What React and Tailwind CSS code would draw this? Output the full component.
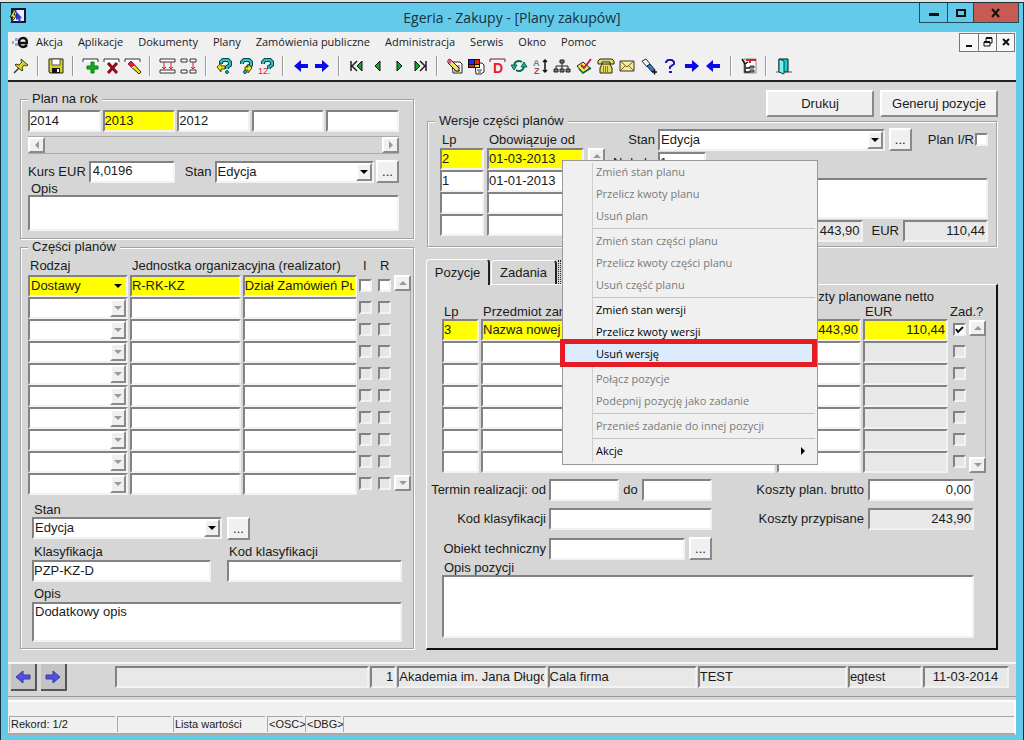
import { useState } from 'react'

const MENU = ['Akcja', 'Aplikacje', 'Dokumenty', 'Plany', 'Zamówienia publiczne', 'Administracja', 'Serwis', 'Okno', 'Pomoc']

const YEARS = ['2014', '2013', '2012', '', '']

const PARTS = [
  { kind: 'Dostawy', code: 'R-RK-KZ', name: 'Dział Zamówień Publicznych' },
  ...Array.from({ length: 9 }, () => ({ kind: '', code: '', name: '' })),
]

const VERSIONS = [
  { lp: '2', date: '01-03-2013' },
  { lp: '1', date: '01-01-2013' },
  { lp: '', date: '' },
  { lp: '', date: '' },
]

const POSITIONS = [
  { lp: '3', name: 'Nazwa nowej pozycji', pln: '443,90', eur: '110,44', task: true },
  ...Array.from({ length: 6 }, () => ({ lp: '', name: '', pln: '', eur: '', task: false })),
]

const CONTEXT_MENU = [
  [
    { label: 'Zmień stan planu', disabled: true },
    { label: 'Przelicz kwoty planu', disabled: true },
    { label: 'Usuń plan', disabled: true },
  ],
  [
    { label: 'Zmień stan części planu', disabled: true },
    { label: 'Przelicz kwoty części planu', disabled: true },
    { label: 'Usuń część planu', disabled: true },
  ],
  [
    { label: 'Zmień stan wersji' },
    { label: 'Przelicz kwoty wersji' },
    { label: 'Usuń wersję', active: true },
  ],
  [
    { label: 'Połącz pozycje', disabled: true },
    { label: 'Podepnij pozycję jako zadanie', disabled: true },
  ],
  [{ label: 'Przenieś zadanie do innej pozycji', disabled: true }],
  [{ label: 'Akcje', submenu: true }],
]

// Sunken Win32 edge shared by every field
const SUNKEN = 'border-2 border-t-[#828282] border-l-[#828282] border-r-[#f2f2f2] border-b-[#f2f2f2]'
const RAISED = 'border-2 border-t-white border-l-white border-r-[#8a8a8a] border-b-[#8a8a8a] bg-[#f0f0f0]'

const ARROW_RIGHT = 'M1 6h7V2l7 6-7 6v-4H1z'
const ARROW_LEFT = 'M15 6H8V2L1 8l7 6v-4h7z'

const QUESTION = 'M5 6V4l2-2h5l2 2v3l-3 2v2'

const ICONS = {
  pin: (
    <>
      <path d="M1 15l5-5" stroke="#333" strokeWidth="1.5" />
      <path d="M8 1l7 6-2 1-2-1-2 3 1 2-1 1-7-6 1-1 3 1 3-3-1-2z" fill="#d8cf30" stroke="#4a4600" />
    </>
  ),
  save: (
    <>
      <path d="M1 1h14v14H2l-1-1z" fill="#d8d02a" stroke="#222" />
      <path d="M4 1h8v6H4z" fill="#fff" stroke="#555" />
      <path d="M4 10h8v5H4z" fill="#111" />
      <path d="M9 11h2v3H9z" fill="#fff" />
    </>
  ),
  insert: (
    <>
      <path d="M0 4V1h15v3" fill="#fff" stroke="#333" />
      <path d="M8 4h3v4h4v3h-4v4H8v-4H4V8h4z" fill="#12b01c" stroke="#0a7a12" />
    </>
  ),
  remove: (
    <>
      <path d="M0 4V1h15v3" fill="#fff" stroke="#333" />
      <path d="M4 5l9 10M13 5L4 15" stroke="#8d0d1a" strokeWidth="3" />
    </>
  ),
  clear: (
    <>
      <path d="M0 4V1h15v3" fill="#fff" stroke="#333" />
      <path d="M6 3l10 11-2 2L3 6z" fill="#e8dc20" stroke="#222" />
      <path d="M6 3l4 4-3 3-4-4z" fill="#e02040" />
      <path d="M9 8l-2 2" stroke="#fff" />
    </>
  ),
  enterQuery: (
    <>
      <path d="M0 4V1h15v3zM0 15v-3h15v3z" fill="#fff" stroke="#333" />
      <path d="M4 4v7M11 4v7M2 9l2 2 2-2M9 9l2 2 2-2" stroke="#d1202c" fill="none" />
    </>
  ),
  splitQuery: (
    <>
      <path d="M0 4V1h6v3zM9 4V1h6v3zM0 15v-3h6v3zM9 15v-3h6v3z" fill="#fff" stroke="#333" />
      <path d="M12 4v7M10 9l2 2 2-2" stroke="#d1202c" fill="none" />
    </>
  ),
  askLeft: (
    <>
      <path d={QUESTION} fill="none" stroke="#064a4d" strokeWidth="4" />
      <path d={QUESTION} fill="none" stroke="#27c3c8" strokeWidth="2" />
      <circle cx="11" cy="14" r="1.5" fill="#27c3c8" stroke="#064a4d" />
      <path d="M1 9l4-4v3h4v3H5v3z" fill="#f2e41c" stroke="#4a4600" />
    </>
  ),
  askRight: (
    <>
      <path d={QUESTION} fill="none" stroke="#064a4d" strokeWidth="4" />
      <path d={QUESTION} fill="none" stroke="#27c3c8" strokeWidth="2" />
      <circle cx="8" cy="14" r="1.5" fill="#27c3c8" stroke="#064a4d" />
      <path d="M15 10l-4-4v3H8v3h3v3z" fill="#f2e41c" stroke="#4a4600" />
    </>
  ),
  askCount: (
    <>
      <path d={QUESTION} fill="none" stroke="#064a4d" strokeWidth="4" />
      <path d={QUESTION} fill="none" stroke="#27c3c8" strokeWidth="2" />
      <text x="0" y="16" fontSize="9" fill="#e02030">12.</text>
    </>
  ),
  left: <path d={ARROW_LEFT} fill="#0808e8" />,
  right: <path d={ARROW_RIGHT} fill="#0808e8" />,
  first: (
    <>
      <path d="M2 3v10M8 3L3 8l5 5" fill="none" stroke="#222" strokeWidth="1.5" />
      <path d="M13 3L8 8l5 5z" fill="#16a52a" stroke="#111" />
    </>
  ),
  prev: <path d="M10 3L5 8l5 5z" fill="#16a52a" stroke="#111" />,
  next: <path d="M6 3l5 5-5 5z" fill="#16a52a" stroke="#111" />,
  last: (
    <>
      <path d="M14 3v10M8 3l5 5-5 5" fill="none" stroke="#222" strokeWidth="1.5" />
      <path d="M3 3l5 5-5 5z" fill="#16a52a" stroke="#111" />
    </>
  ),
  edit: (
    <>
      <path d="M5 4h8l2 2v9H6z" fill="#fff" stroke="#222" />
      <path d="M7 13h6M9 8h4M10 10h3" stroke="#555" />
      <path d="M1 2l2-1 9 9v3H9L1 5z" fill="#f0df60" stroke="#222" />
      <path d="M1 2l2-1 2 2-2 3-2-2z" fill="#d8509c" />
    </>
  ),
  palette: (
    <>
      <path d="M7 5h7l2 2v7l-3 2H8z" fill="#fff" stroke="#222" />
      <path d="M0 1h12v9H0z" fill="#111" />
      <path d="M1 2h5v4H1z" fill="#1c2cf0" />
      <path d="M7 2h4v4H7z" fill="#f01c1c" />
      <path d="M1 7h5v2H1z" fill="#f01c1c" />
      <path d="M7 7h4v2H7z" fill="#f0e01c" />
      <path d="M9 12h5M10 14h3" stroke="#333" />
    </>
  ),
  dict: (
    <>
      <path d="M0 4V1h15v3" fill="none" stroke="#7c1a22" />
      <text x="3" y="15" fontSize="14" fontWeight="bold" fill="#ea1c2c">D</text>
    </>
  ),
  refresh: (
    <>
      <path d="M3 7c1-4 5-5 8-3" fill="none" stroke="#0b6a58" strokeWidth="2" />
      <path d="M0 7h6l-3 5z" fill="#1fae90" stroke="#0b6a58" />
      <path d="M13 9c-1 4-5 5-8 3" fill="none" stroke="#0b6a58" strokeWidth="2" />
      <path d="M16 9h-6l3-5z" fill="#1fae90" stroke="#0b6a58" />
    </>
  ),
  sort: (
    <>
      <text x="0" y="8" fontSize="9" fontWeight="bold" fill="#5f8a87">A</text>
      <text x="1" y="16" fontSize="9" fontWeight="bold" fill="#a04a55">Z</text>
      <path d="M12 2v12M10 4l2-2 2 2M10 12l2 2 2-2" stroke="#111" strokeWidth="1.5" fill="none" />
    </>
  ),
  tree: (
    <>
      <path d="M8 4v4M2 12V8h12v4M8 8v4" fill="none" stroke="#222" />
      <path d="M6 2h4v3H6zM0 11h4v3H0zM6 11h4v3H6zM12 11h4v3h-4z" fill="#777" stroke="#222" />
    </>
  ),
  approve: (
    <>
      <path d="M1 8l6-4 7 6-7 5z" fill="#f2e85c" stroke="#222" />
      <path d="M3 11l4 4 8-5" fill="none" stroke="#0a6a3a" strokeWidth="1.5" />
      <path d="M5 7l3 3 7-9" fill="none" stroke="#c01c50" strokeWidth="2" />
    </>
  ),
  phone: (
    <>
      <path d="M0 3l2-2h12l2 2v3h-4V4H4v2H0z" fill="#e6dc5c" stroke="#222" />
      <path d="M4 6h8l2 4v5H2v-5z" fill="#e6dc5c" stroke="#222" />
      <path d="M5 9h6M5 11h6M5 13h6" stroke="#222" strokeDasharray="1 1" />
    </>
  ),
  mail: (
    <>
      <path d="M1 3h14v10H1z" fill="#f8ee96" stroke="#333" />
      <path d="M1 3l7 6 7-6M1 13l5-5M15 13l-5-5" fill="none" stroke="#6a5a28" />
    </>
  ),
  torch: (
    <>
      <path d="M1 3l4-2 4 5-3 3z" fill="#e8f4ff" stroke="#333" />
      <path d="M6 8l3-2 5 6-3 2z" fill="#3b7cc8" stroke="#112233" />
      <path d="M11 14h5M13.5 11.5v5" stroke="#111" strokeWidth="1.5" />
    </>
  ),
  help: (
    <>
      <path d="M4 5V4l2-2h4l2 2v2L8 9v2" fill="none" stroke="#1a1ab8" strokeWidth="2" />
      <path d="M7 13h3v2H7z" fill="#1a1ab8" />
    </>
  ),
  outline: (
    <>
      <path d="M3 1h12v14H3z" fill="#fff" stroke="#888" />
      <path d="M5 2h10" stroke="#e02030" strokeWidth="2" />
      <path d="M1 1l3 5 3-2M4 6v8h5M5 10h4M8 4h2" fill="none" stroke="#111" strokeWidth="1.5" />
      <path d="M9 8h4v2H9zM9 12h4v2H9z" fill="#999" stroke="#333" />
    </>
  ),
  door: (
    <>
      <path d="M3 1h9v13H3z" fill="#18d0d0" stroke="#111" />
      <path d="M3 1l5 2v13l-5-2z" fill="#7af0f0" stroke="#0a4040" />
      <path d="M0 14h3M12 14h4" stroke="#555" />
    </>
  ),
}

const TOOLBAR = [
  [['pin', 'Przypnij']],
  [['save', 'Zapisz']],
  [['insert', 'Dodaj rekord'], ['remove', 'Usuń rekord'], ['clear', 'Wyczyść rekord']],
  [['enterQuery', 'Wyczyść blok'], ['splitQuery', 'Duplikuj']],
  [['askLeft', 'Wprowadź zapytanie'], ['askRight', 'Wykonaj zapytanie'], ['askCount', 'Policz rekordy']],
  [['left', 'Poprzedni blok'], ['right', 'Następny blok']],
  [['first', 'Pierwszy'], ['prev', 'Poprzedni'], ['next', 'Następny'], ['last', 'Ostatni']],
  [
    ['edit', 'Edytuj'], ['palette', 'Kolory'], ['dict', 'Słownik'], ['refresh', 'Odśwież'], ['sort', 'Sortuj'],
    ['tree', 'Struktura'], ['approve', 'Zatwierdź'], ['phone', 'Telefon'], ['mail', 'Poczta'], ['torch', 'Szukaj'],
    ['help', 'Pomoc'], ['right', 'Dalej'], ['left', 'Wstecz'],
  ],
  [['outline', 'Drzewo']],
  [['door', 'Wyjście']],
]

function Icon({ name }) {
  return (
    <svg className="h-4 w-4 shrink-0 overflow-visible" viewBox="0 0 16 16" aria-hidden="true">
      {ICONS[name]}
    </svg>
  )
}

function Field({ className = '', tone = 'bg-white', ...props }) {
  return <input type="text" className={`block h-[22px] min-w-0 pr-px pb-[2px] ${SUNKEN} ${tone} ${className}`} {...props} />
}

function Area({ className = '', ...props }) {
  return <textarea className={`block w-full resize-none bg-white px-px ${SUNKEN} ${className}`} {...props} />
}

function Tick({ tone = 'bg-white', ...props }) {
  return (
    <span className="relative block h-[13px] w-[13px] shrink-0">
      <input type="checkbox" className={`peer block h-[13px] w-[13px] appearance-none ${SUNKEN} ${tone}`} {...props} />
      <svg className="pointer-events-none absolute inset-0 hidden h-[13px] w-[13px] peer-checked:block" viewBox="0 0 13 13">
        <path d="M3 6l2 3 5-5" fill="none" stroke="#111" strokeWidth="2" />
      </svg>
    </span>
  )
}

function Triangle({ dir, className = 'text-[#999]' }) {
  const d = { up: 'M0 6l4-4 4 4z', down: 'M0 2h8L4 6z', left: 'M6 0v8L2 4z', right: 'M2 0l4 4-4 4z' }[dir]
  return (
    <svg className={`h-2 w-2 ${className}`} viewBox="0 0 8 8" aria-hidden="true">
      <path d={d} fill="currentColor" />
    </svg>
  )
}

function Select({ value, className = '', tone = 'bg-white', off = false, ...props }) {
  return (
    <span className={`relative block min-w-0 ${className}`}>
      <select
        className={`block h-[22px] w-full appearance-none pl-px ${SUNKEN} ${tone}`}
        disabled={off}
        defaultValue={value}
        {...props}
      >
        <option value={value}>{value}</option>
      </select>
      <span className={`pointer-events-none absolute top-[2px] right-[2px] flex h-[18px] w-[16px] items-center justify-center ${tone === 'bg-white' ? RAISED : ''}`}>
        <Triangle dir="down" className={off ? 'text-[#999]' : 'text-black'} />
      </span>
    </span>
  )
}

function Dots({ label }) {
  return (
    <button type="button" aria-label={label} className={`h-[23px] w-[23px] shrink-0 leading-[14px] ${RAISED}`}>
      ...
    </button>
  )
}

function ScrollEnd({ dir, label }) {
  return (
    <button type="button" aria-label={label} className={`flex h-4 w-[17px] shrink-0 items-center justify-center ${RAISED}`}>
      <Triangle dir={dir} />
    </button>
  )
}

function VScroll({ className = '' }) {
  return (
    <div className={`flex w-[17px] shrink-0 flex-col justify-between border-r border-[#aaa] bg-[#d6d6d6] ${className}`}>
      <ScrollEnd dir="up" label="W górę" />
      <ScrollEnd dir="down" label="W dół" />
    </div>
  )
}

function Group({ title, className = '', bodyClass = '', children }) {
  return (
    <fieldset className={`min-w-0 border border-[#a2a2a2] shadow-[1px_1px_0_#fff,inset_1px_1px_0_#fff] ${className}`}>
      <legend className="ml-[7px] bg-[#d6d6d6] px-1 leading-[14px]">{title}</legend>
      <div className={bodyClass}>{children}</div>
    </fieldset>
  )
}

function TitleBar() {
  return (
    <header className="flex h-[29px] items-start bg-[#64caea] px-2">
      <div className="flex-1 pt-1">
        <svg className="h-[18px] w-[18px]" viewBox="0 0 18 18" aria-hidden="true">
          <path d="M3 2h13v13H3z" fill="#e8ecff" stroke="#15153a" strokeWidth="2" />
          <path d="M7 4l6 7-2 .5 1 3-2 .5-1-3-2 1z" fill="#2a3ae0" />
          <path d="M5 3L1 10h3l-2 6 6-8H5l2-5z" fill="#f0dc28" stroke="#222" />
        </svg>
      </div>
      <h1 className="self-center font-['Open_Sans','Noto_Sans',sans-serif] text-[14px] text-[#16323c]">
        Egeria - Zakupy - [Plany zakupów]
      </h1>
      <div className="flex flex-1 justify-end">
        <div className="-mr-1 flex h-[20px] border border-t-0 border-[#1f4b5a]">
          <button type="button" aria-label="Minimalizuj" className="flex w-[27px] items-center justify-center">
            <svg className="h-3 w-3" viewBox="0 0 12 12"><path d="M1 6h10v3H1z" fill="#111" /></svg>
          </button>
          <button type="button" aria-label="Maksymalizuj" className="flex w-[26px] items-center justify-center border-l border-[#1f4b5a]">
            <svg className="h-3 w-3" viewBox="0 0 12 12"><path d="M2 3h8v6H2z" fill="none" stroke="#111" strokeWidth="2" /></svg>
          </button>
          <button type="button" aria-label="Zamknij" className="flex w-[45px] items-center justify-center border-l border-[#1f4b5a] bg-[#c75b54]">
            <svg className="h-3 w-3" viewBox="0 0 12 12"><path d="M2 2l7 8M9 2l-7 8" stroke="#111" strokeWidth="2" /></svg>
          </button>
        </div>
      </div>
    </header>
  )
}

function MenuBar() {
  return (
    <div className="flex h-5 items-center bg-[#f0f0f0] pl-1">
      <svg className="mr-2 h-4 w-4" viewBox="0 0 16 16" aria-hidden="true">
        <path d="M0 7h2v3H0zM3 4h3v3H3zM3 9h3v3H3z" fill="#9aa0e0" />
        <path d="M6 9h9c0-3-1.5-5-4-5s-4 2-4 4.5 2 4.5 4 4.5 3-1 4-2" fill="none" stroke="#111" strokeWidth="2.5" />
      </svg>
      <nav className="flex flex-1 gap-[15px] font-['Open_Sans','Noto_Sans',sans-serif] text-[11px]">
        {MENU.map((item) => (
          <button key={item} type="button">{item}</button>
        ))}
      </nav>
      <div className="mr-px flex h-[19px] border border-[#777] bg-[#f8f8f8]">
        <button type="button" aria-label="Minimalizuj dokument" className="flex w-[18px] items-center justify-center">
          <svg className="h-3 w-3" viewBox="0 0 12 12"><path d="M3 9h6v2H3z" fill="#111" /></svg>
        </button>
        <button type="button" aria-label="Przywróć dokument" className="flex w-[18px] items-center justify-center border-l border-[#777]">
          <svg className="h-3 w-3" viewBox="0 0 12 12">
            <path d="M4 5V2h6v5H8M2 6h6v4H2z" fill="none" stroke="#111" />
            <path d="M4 2h6M2 6h6" stroke="#111" strokeWidth="2" />
          </svg>
        </button>
        <button type="button" aria-label="Zamknij dokument" className="flex w-[18px] items-center justify-center border-l border-[#777]">
          <svg className="h-3 w-3" viewBox="0 0 12 12"><path d="M3 3l6 6M9 3L3 9" stroke="#111" strokeWidth="2" /></svg>
        </button>
      </div>
    </div>
  )
}

function Toolbar() {
  return (
    <div className="flex h-[30px] items-center border-b-2 border-[#222] bg-[#f0f0f0] pl-[2px]">
      {TOOLBAR.map((group, i) => (
        <div key={i} className="flex items-center">
          {i > 0 && <span className="mx-[6px] h-5 w-[2px] border-l border-[#999] bg-white" />}
          <div className={`flex justify-between ${group.length > 6 ? 'w-[280px]' : ''}`}>
            {group.map(([icon, label]) => (
              <button key={label} type="button" aria-label={label} className="flex w-[21px] justify-center">
                <Icon name={icon} />
              </button>
            ))}
          </div>
        </div>
      ))}
    </div>
  )
}

function PlanGroup() {
  const [year, setYear] = useState(1)

  return (
    <Group title="Plan na rok" bodyClass="pr-[14px] pb-[7px] pl-[7px]">
      <div className="grid grid-cols-5 gap-[2px] pt-1">
        {YEARS.map((y, i) => (
          <Field
            key={i}
            aria-label={`Rok ${i + 1}`}
            className="w-full"
            tone={i === year ? 'bg-[#ffff00]' : 'bg-white'}
            defaultValue={y}
            onFocus={() => setYear(i)}
          />
        ))}
      </div>
      <div className="mt-1 flex justify-between border-y border-[#aaa]">
        <ScrollEnd dir="left" label="W lewo" />
        <ScrollEnd dir="right" label="W prawo" />
      </div>
      <div className="mt-[6px] flex items-center">
        <label htmlFor="rate">Kurs EUR</label>
        <Field id="rate" className="ml-[3px] w-[86px] pl-[2px]" defaultValue="4,0196" />
        <label htmlFor="plan-state" className="mr-[3px] ml-[10px]">Stan</label>
        <Select id="plan-state" value="Edycja" className="mr-[2px] flex-1" />
        <Dots label="Stan planu" />
      </div>
      <label htmlFor="plan-desc" className="ml-[3px] block w-fit leading-[12px]">Opis</label>
      <Area id="plan-desc" className="h-9" />
    </Group>
  )
}

function PartsGroup() {
  return (
    <Group title="Części planów" className="mt-px" bodyClass="pr-[2px] pb-[6px] pl-[7px]">
      <div className="flex">
        <table className="mt-[3px] w-full flex-1 table-fixed border-separate border-spacing-0">
          <colgroup>
            <col className="w-[28%]" />
            <col className="w-[31%]" />
            <col />
            <col className="w-[19px]" />
            <col className="w-[14px]" />
          </colgroup>
          <thead>
            <tr className="h-[18px] text-left leading-[14px]">
              <th className="p-0 pl-[2px] font-normal">Rodzaj</th>
              <th colSpan={2} className="p-0 pl-[2px] font-normal">Jednostka organizacyjna (realizator)</th>
              <th className="p-0 pl-1 font-normal">I</th>
              <th className="p-0 pl-[2px] font-normal">R</th>
            </tr>
          </thead>
          <tbody>
            {PARTS.map((row, i) => {
              const tone = i === 0 ? 'bg-[#ffff00]' : 'bg-white'
              return (
                <tr key={i} className="h-[22px] align-top">
                  <td className="p-0 pr-[2px]">
                    <Select value={row.kind} tone={tone} off={i > 0} aria-label={`Rodzaj ${i + 1}`} />
                  </td>
                  <td className="p-0 pr-[2px]">
                    <Field className="w-full" tone={tone} defaultValue={row.code} aria-label={`Kod jednostki ${i + 1}`} />
                  </td>
                  <td className="p-0 pr-[2px]">
                    <Field className="w-full" tone={tone} defaultValue={row.name} aria-label={`Nazwa jednostki ${i + 1}`} />
                  </td>
                  <td className="p-0 pt-1">
                    <Tick tone={i === 0 ? 'bg-white' : 'bg-[#e6e6e6]'} disabled={i > 0} aria-label={`I ${i + 1}`} />
                  </td>
                  <td className="p-0 pt-1">
                    <Tick tone={i === 0 ? 'bg-white' : 'bg-[#e6e6e6]'} disabled={i > 0} aria-label={`R ${i + 1}`} />
                  </td>
                </tr>
              )
            })}
          </tbody>
        </table>
        <VScroll className="mt-[21px] mb-1 ml-[2px]" />
      </div>
      <div className="pr-[9px] pl-1">
        <label htmlFor="part-state" className="mt-2 block w-fit pl-[2px] leading-[14px]">Stan</label>
        <div className="flex">
          <Select id="part-state" value="Edycja" className="mr-[5px] w-[190px]" />
          <Dots label="Stan części" />
        </div>
        <div className="mt-1 grid grid-cols-[179fr_175fr] gap-4">
          <div>
            <label htmlFor="class" className="block w-fit pl-[2px] leading-[16px]">Klasyfikacja</label>
            <Field id="class" className="w-full" defaultValue="PZP-KZ-D" />
          </div>
          <div>
            <label htmlFor="class-code" className="block w-fit pl-[2px] leading-[16px]">Kod klasyfikacji</label>
            <Field id="class-code" className="w-full" />
          </div>
        </div>
        <label htmlFor="part-desc" className="mt-1 block w-fit pl-[2px] leading-[16px]">Opis</label>
        <Area id="part-desc" className="h-10" defaultValue="Dodatkowy opis" />
      </div>
    </Group>
  )
}

function VersionsGroup() {
  return (
    <Group title="Wersje części planów" className="mx-px -mt-[3px]" bodyClass="pr-2 pb-1 pl-3">
      <div className="flex">
        <table className="mt-1 w-[144px] table-fixed self-start border-separate border-spacing-0">
          <colgroup>
            <col className="w-[47px]" />
            <col />
          </colgroup>
          <thead>
            <tr className="h-4 text-left leading-[14px]">
              <th className="p-0 pl-[2px] font-normal">Lp</th>
              <th className="p-0 pl-[2px] font-normal">Obowiązuje od</th>
            </tr>
          </thead>
          <tbody>
            {VERSIONS.map((row, i) => {
              const tone = i === 0 ? 'bg-[#ffff00]' : 'bg-white'
              return (
                <tr key={i} className="h-[22px] align-top">
                  <td className="p-0 pr-[3px]">
                    <Field className="w-full" tone={tone} defaultValue={row.lp} aria-label={`Lp wersji ${i + 1}`} />
                  </td>
                  <td className="p-0">
                    <Field className="w-full" tone={tone} defaultValue={row.date} aria-label={`Obowiązuje od ${i + 1}`} />
                  </td>
                </tr>
              )
            })}
          </tbody>
        </table>
        <VScroll className="mt-5 mb-2 ml-1" />
        <div className="min-w-0 flex-1">
          <div className="flex items-center">
            <label htmlFor="ver-state" className="mr-[3px] w-[50px] text-right">Stan</label>
            <Select id="ver-state" value="Edycja" className="mr-[4px] flex-1" />
            <Dots label="Stan wersji" />
            <label htmlFor="plan-ir" className="mr-px ml-4">Plan I/R</label>
            <Tick id="plan-ir" />
          </div>
          <div className="mt-px flex items-center">
            <label htmlFor="ver-no" className="mr-[3px] w-[50px] pl-2">Nr kol.</label>
            <Field id="ver-no" className="w-12" defaultValue="1" />
          </div>
          <div className="mt-1 pl-[53px]">
            <Area aria-label="Opis wersji" className="h-[41px]" />
          </div>
          <div className="mt-px flex items-center justify-end">
            <Field aria-label="Kwota PLN" className="w-[85px] text-right" tone="bg-[#e8e8e8]" readOnly value="443,90" />
            <label htmlFor="ver-eur" className="mr-1 ml-[9px]">EUR</label>
            <Field id="ver-eur" className="w-[85px] text-right" tone="bg-[#e8e8e8]" readOnly value="110,44" />
          </div>
        </div>
      </div>
    </Group>
  )
}

function PositionsPanel() {
  return (
    <section className="border-t border-r-2 border-b-2 border-l border-t-white border-r-[#111] border-b-[#111] border-l-white pt-[5px] pb-[10px]">
      <div className="flex pr-[10px] pl-[15px]">
        <table className="w-full flex-1 table-fixed border-separate border-spacing-0">
          <colgroup>
            <col className="w-[39px]" />
            <col />
            <col className="w-[86px]" />
            <col className="w-[90px]" />
            <col className="w-[14px]" />
          </colgroup>
          <thead className="text-left leading-[14px]">
            <tr className="h-[14px]">
              <th colSpan={2} className="p-0" />
              <th colSpan={2} className="p-0 text-center font-normal">Koszty planowane netto</th>
              <th className="p-0" />
            </tr>
            <tr className="h-[15px]">
              <th className="p-0 pl-[2px] font-normal">Lp</th>
              <th className="p-0 pl-[2px] font-normal">Przedmiot zamówienia</th>
              <th className="p-0 pl-[2px] font-normal">PLN</th>
              <th className="p-0 pl-[2px] font-normal">EUR</th>
              <th className="p-0 font-normal whitespace-nowrap"><span className="-ml-[3px]">Zad.?</span></th>
            </tr>
          </thead>
          <tbody>
            {POSITIONS.map((row, i) => {
              const tone = i === 0 ? 'bg-[#ffff00]' : 'bg-white'
              return (
                <tr key={i} className="h-[22px] align-top">
                  <td className="p-0 pr-[2px]">
                    <Field className="w-full" tone={tone} defaultValue={row.lp} aria-label={`Lp pozycji ${i + 1}`} />
                  </td>
                  <td className="p-0 pr-[2px]">
                    <Field className="w-full" tone={tone} defaultValue={row.name} aria-label={`Przedmiot ${i + 1}`} />
                  </td>
                  <td className="p-0 pr-[2px]">
                    <Field className="w-full text-right" tone={tone} defaultValue={row.pln} aria-label={`Koszt PLN ${i + 1}`} />
                  </td>
                  <td className="p-0 pr-[5px]">
                    <Field
                      className="w-full text-right"
                      tone={i === 0 ? tone : 'bg-[#e8e8e8]'}
                      defaultValue={row.eur}
                      aria-label={`Koszt EUR ${i + 1}`}
                    />
                  </td>
                  <td className="p-0 pt-1">
                    <Tick tone={i === 0 ? 'bg-white' : 'bg-[#e6e6e6]'} disabled={i > 0} defaultChecked={row.task} aria-label={`Zadanie ${i + 1}`} />
                  </td>
                </tr>
              )
            })}
          </tbody>
        </table>
        <VScroll className="mt-[30px] ml-[2px]" />
      </div>

      <div className="mt-[6px] flex pr-[22px]">
        <div className="flex flex-col gap-[7px]">
          <div className="flex items-center">
            <label htmlFor="from" className="mr-[3px] w-[119px] text-right">Termin realizacji: od</label>
            <Field id="from" className="w-[70px]" />
            <label htmlFor="to" className="w-[23px] text-center">do</label>
            <Field id="to" className="w-[70px]" />
          </div>
          <div className="flex items-center">
            <label htmlFor="pos-code" className="mr-[3px] w-[119px] text-right">Kod klasyfikacji</label>
            <Field id="pos-code" className="w-[163px]" />
          </div>
          <div className="flex items-center">
            <label htmlFor="object" className="mr-[3px] w-[119px] text-right">Obiekt techniczny</label>
            <Field id="object" className="mr-1 w-[136px]" />
            <Dots label="Obiekt techniczny" />
          </div>
        </div>
        <div className="flex flex-1 flex-col gap-[7px]">
          <div className="flex items-center justify-end">
            <label htmlFor="gross" className="mr-1">Koszty plan. brutto</label>
            <Field id="gross" className="w-[106px] text-right" defaultValue="0,00" />
          </div>
          <div className="flex items-center justify-end">
            <label htmlFor="assigned" className="mr-1">Koszty przypisane</label>
            <Field id="assigned" className="w-[106px] text-right" tone="bg-[#e8e8e8]" readOnly value="243,90" />
          </div>
        </div>
      </div>
      <div className="pr-[22px] pl-[15px]">
        <label htmlFor="pos-desc" className="block w-fit pl-[2px] leading-[15px]">Opis pozycji</label>
        <Area id="pos-desc" className="h-[63px]" />
      </div>
    </section>
  )
}

function Tabs() {
  return (
    <div role="tablist" className="relative -mb-px flex items-end">
      <button
        type="button"
        role="tab"
        aria-selected="true"
        className="h-[26px] w-[64px] rounded-t-sm border-t border-r-2 border-l border-t-white border-r-[#222] border-l-white bg-[#d6d6d6]"
      >
        Pozycje
      </button>
      <button
        type="button"
        role="tab"
        aria-selected="false"
        className="mb-px ml-px h-[24px] w-[66px] rounded-t-sm border-t border-r-2 border-l border-t-white border-r-[#222] border-l-white"
      >
        Zadania
      </button>
      <button
        type="button"
        role="tab"
        aria-selected="false"
        aria-label="Szczegóły"
        className="mb-px ml-px h-[24px] w-[66px] border-l border-dotted border-[#222] pl-px"
      >
        <span className="block h-full border-l border-dotted border-[#222]" />
      </button>
    </div>
  )
}

function ContextMenu() {
  return (
    <div
      role="menu"
      className="absolute top-[78px] left-[136px] w-[256px] border border-[#999] bg-[#f0f0f0] pb-[2px] font-['Open_Sans','Noto_Sans',sans-serif] text-[11px]"
    >
      <span className="absolute inset-y-[2px] left-[29px] w-px bg-[#cfcfcf]" />
      {CONTEXT_MENU.map((items, g) => (
        <div key={g}>
          {g > 0 && <div className="my-px mr-[2px] ml-[30px] h-px bg-[#c4c4c4]" />}
          {items.map((item) => (
            <button
              key={item.label}
              type="button"
              role="menuitem"
              disabled={item.disabled}
              className={`relative flex h-[22px] w-full items-center pr-[10px] pl-[33px] text-left ${item.disabled ? 'text-[#7a7a7a]' : 'text-black'}`}
            >
              {item.active && (
                <span className="absolute -top-1 right-0 -bottom-[2px] -left-[3px] border-[5px] border-[#e51c23] bg-[#dbeafc]" />
              )}
              <span className="relative flex-1">{item.label}</span>
              {item.submenu && <Triangle dir="right" className="text-black" />}
            </button>
          ))}
        </div>
      ))}
    </div>
  )
}

function FooterBar() {
  const nav = 'flex h-[27px] w-[26px] items-center justify-center border-r-2 border-b-2 border-[#555] bg-[#c4c4c4]'
  return (
    <div className="flex items-start border-t-2 border-b border-t-[#f4f4f4] border-b-[#999] pr-[7px] pb-1 pl-[3px]">
      <button type="button" aria-label="Poprzednia strona" className={nav}>
        <svg className="h-4 w-4" viewBox="0 0 16 16"><path d={ARROW_LEFT} fill="#5050e8" stroke="#3a3a9a" /></svg>
      </button>
      <button type="button" aria-label="Następna strona" className={`ml-1 ${nav}`}>
        <svg className="h-4 w-4" viewBox="0 0 16 16"><path d={ARROW_RIGHT} fill="#5050e8" stroke="#3a3a9a" /></svg>
      </button>
      <div className="mt-[2px] mb-1 ml-12 grid flex-1 grid-cols-[254fr_26px_149fr_149fr_149fr_74fr_86px] gap-px">
        <Field aria-label="Komunikat" className="w-full" tone="bg-[#e8e8e8]" readOnly />
        <Field aria-label="Numer firmy" className="w-full text-right" tone="bg-[#e8e8e8]" readOnly value="1" />
        <Field aria-label="Firma" className="w-full" tone="bg-[#e8e8e8]" readOnly value="Akademia im. Jana Długosza" />
        <Field aria-label="Zakres" className="w-full" tone="bg-[#e8e8e8]" readOnly value="Cala firma" />
        <Field aria-label="Baza" className="w-full" tone="bg-[#e8e8e8]" readOnly value="TEST" />
        <Field aria-label="Użytkownik" className="w-full" tone="bg-[#e8e8e8]" readOnly value="egtest" />
        <Field aria-label="Data" className="w-full text-center" tone="bg-[#e8e8e8]" readOnly value="11-03-2014" />
      </div>
    </div>
  )
}

function StatusBar() {
  const cell = 'h-4 border-t border-l border-[#a8a8a8] pl-px'
  return (
    <footer className="mt-[3px] flex gap-[2px] border-t-2 border-r-2 border-b-2 border-t-white border-r-white border-b-[#a8a8a8] bg-[#f0f0f0] pt-[14px] pb-px pl-px text-[11px] leading-[15px] whitespace-nowrap">
      <div className={`w-[106px] ${cell}`}>Rekord: 1/2</div>
      <div className={`w-[54px] ${cell}`} />
      <div className={`w-[92px] ${cell}`}>Lista wartości</div>
      <div className={`w-9 ${cell}`}>&lt;OSC&gt;</div>
      <div className={`w-9 ${cell}`}>&lt;DBG&gt;</div>
      <div className={`flex-1 ${cell}`} />
    </footer>
  )
}

export default function App() {
  return (
    <div className="flex min-h-screen flex-col border-t-2 border-[#e4e4e4] bg-[#64caea] font-['Liberation_Sans',Arial,sans-serif] text-[13px] leading-4 text-[#1a1a1a]">
      <div className="flex flex-1 flex-col border border-[#17323d]">
        <TitleBar />
        <div className="mx-[7px] mb-[6px] flex-1 bg-[#d6d6d6]">
          <MenuBar />
          <Toolbar />
          <main className="grid grid-cols-[394fr_572fr] gap-3 pr-[18px] pb-3 pl-3">
            <div className="min-w-0 pt-[10px]">
              <PlanGroup />
              <PartsGroup />
            </div>
            <div className="relative min-w-0 pt-2">
              <div className="flex justify-end gap-[6px]">
                <button type="button" className={`h-[27px] w-[108px] ${RAISED}`}>Drukuj</button>
                <button type="button" className={`h-[27px] w-[118px] ${RAISED}`}>Generuj pozycje</button>
              </div>
              <VersionsGroup />
              <div className="mt-3">
                <Tabs />
                <PositionsPanel />
              </div>
              <ContextMenu />
            </div>
          </main>
          <FooterBar />
          <StatusBar />
        </div>
      </div>
    </div>
  )
}
